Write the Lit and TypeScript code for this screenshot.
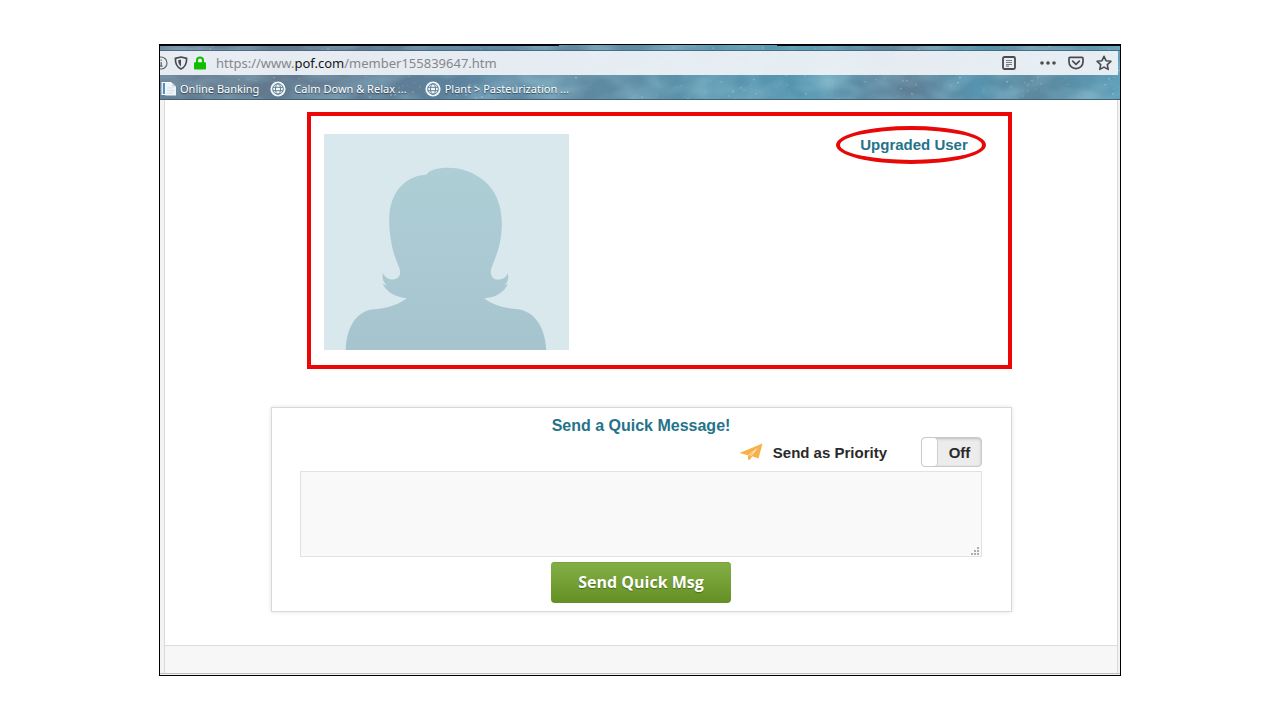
import { LitElement, html, svg, css } from "lit";
import { customElement, state } from "lit/decorators.js";

/** Scattered points for the starry toolbar theme: x, y, radius, opacity. */
function makeStars(count: number): number[][] {
  let seed = 71;
  const next = () => {
    seed = (seed * 16807) % 2147483647;
    return seed / 2147483647;
  };
  return Array.from({ length: count }, () => [
    Math.round(next() * 960),
    Math.round(next() * 54),
    0.4 + next() * 0.6,
    0.1 + next() * 0.35,
  ]);
}

const STARS = makeStars(360);

const globe = svg`<svg class="globe" viewBox="0 0 16 16" aria-hidden="true">
  <circle cx="8" cy="8" r="7.6" fill="#f4f8fa"/>
  <g fill="none" stroke="#5f8297" stroke-width="1">
    <circle cx="8" cy="8" r="5.3"/>
    <ellipse cx="8" cy="8" rx="2.5" ry="5.3"/>
    <path d="M2.9 6.3h10.2M2.9 9.7h10.2"/>
  </g>
</svg>`;

@customElement("browser-bar")
export class BrowserBar extends LitElement {
  static styles = css`
    :host {
      display: block;
      position: relative;
      overflow: hidden;
      color: #fff;
      font-family: "Noto Sans", "Open Sans", sans-serif;
      background: linear-gradient(90deg, #64788c 0%, #61798f 18%, #5c84a0 34%, #5f88a0 44%,
        #5793ac 58%, #5796b0 68%, #5f7f96 78%, #5693ae 85%, #5d889f 91%, #5798b3 100%);
    }
    .sky {
      position: absolute;
      inset: 0;
      width: 100%;
      height: 100%;
    }
    .tabs {
      position: relative;
      height: 6px;
      border-bottom: 1px solid #4c6c84;
      box-sizing: border-box;
      background: linear-gradient(90deg, #05080c 0 41.6%, transparent 41.6% 64.3%, #05080c 64.3%) top / 100% 1px no-repeat;
    }
    .address {
      position: relative;
      display: flex;
      align-items: center;
      height: 24px;
      margin-right: 2px;
      background: rgba(238, 242, 247, 0.94);
      color: #4a4a4f;
    }
    .info { width: 8px; height: 14px; }
    .shield { width: 14px; height: 14px; margin-left: 6px; }
    .lock { width: 12px; height: 14px; margin-left: 6px; }
    .url {
      flex: 1;
      min-width: 0;
      margin: 0 0 0 10px;
      font-size: 13px;
      line-height: 26px;
      color: #85878b;
      white-space: nowrap;
      overflow: hidden;
    }
    .host { color: #15171a; }
    button {
      display: block;
      padding: 0;
      border: 0;
      background: none;
      color: inherit;
      height: 16px;
    }
    button svg { display: block; width: 16px; height: 16px; }
    .actions {
      display: flex;
      align-items: center;
      gap: 12px;
      padding-right: 6px;
    }
    .reader { margin-right: 11px; }
    .bookmarks {
      position: relative;
      display: flex;
      align-items: center;
      height: 25px;
      padding: 3px 0 0 1px;
      box-sizing: border-box;
      border-bottom: 1px solid #3f6478;
      white-space: nowrap;
    }
    .bookmarks a {
      display: flex;
      align-items: center;
      color: #fff;
      font-size: 11px;
      line-height: 20px;
      text-decoration: none;
      text-shadow: 0 1px 1px #2d4355;
    }
    .bookmarks a + a { margin-left: 11px; }
    .bookmarks .tight { margin-left: 18px; }
    .page-icon { width: 15px; height: 16px; margin-right: 4px; }
    .globe { width: 16px; height: 16px; margin-right: 8px; }
    .tight .globe { margin-right: 4px; }
  `;

  render() {
    return html`
      <svg class="sky" viewBox="0 0 960 54" preserveAspectRatio="none" aria-hidden="true">
        <defs>
          <filter id="haze" x="0" y="0" width="100%" height="100%">
            <feTurbulence type="fractalNoise" baseFrequency="0.02 0.035" numOctaves="3" seed="8"></feTurbulence>
            <feColorMatrix values="0 0 0 0 0.4  0 0 0 0 0.7  0 0 0 0 0.8  0.9 0 0 0 -0.3"></feColorMatrix>
          </filter>
        </defs>
        <rect width="960" height="54" filter="url(#haze)"></rect>
        ${STARS.map(([x, y, r, o]) => svg`<circle cx=${x} cy=${y} r=${r} fill="#d9eef6" opacity=${o}></circle>`)}
      </svg>
      <div class="tabs"></div>
      <div class="address">
        <svg class="info" viewBox="0 0 8 14" aria-hidden="true">
          <circle cx="1" cy="7" r="6" fill="none" stroke="#66686c" stroke-width="1.2"/>
          <path d="M1.2 6v4.2M1.2 3.4v1.4M0 10.2h2.6" stroke="#66686c" stroke-width="1.3"/>
        </svg>
        <svg class="shield" viewBox="0 0 14 14" aria-hidden="true">
          <path d="M7 1 12.6 2.4C12.8 7.6 11 11.2 7 13 3 11.2 1.2 7.6 1.4 2.4Z" fill="none" stroke="#4a4a4f" stroke-width="1.7" stroke-linejoin="round"/>
          <path d="M7 3.6v6.8C5 9 4.2 7 4.2 4.3Z" fill="#4a4a4f"/>
        </svg>
        <svg class="lock" viewBox="0 0 12 14" aria-hidden="true">
          <path d="M3 7V4.4a3 3 0 0 1 6 0V7" fill="none" stroke="#12bc00" stroke-width="2"/>
          <rect x="0" y="6.2" width="12" height="7.3" rx="1" fill="#12bc00"/>
        </svg>
        <p class="url">https://www.<span class="host">pof.com</span>/member155839647.htm</p>
        <div class="actions">
          <button class="reader" aria-label="Reader view">
            <svg viewBox="0 0 16 16" fill="none" stroke="#4a4a4f">
              <rect x="2" y="2" width="12" height="12" rx="1.4" stroke-width="1.8"/>
              <path d="M5 5.5h6M5 7.5h6M5 9.5h6M5 11.2h3" stroke-width="1.2" stroke="#7c7e83"/>
            </svg>
          </button>
          <button aria-label="Page actions">
            <svg viewBox="0 0 16 16" fill="#4a4a4f">
              <circle cx="2" cy="8" r="1.8"/><circle cx="8" cy="8" r="1.8"/><circle cx="14" cy="8" r="1.8"/>
            </svg>
          </button>
          <button aria-label="Save to Pocket">
            <svg viewBox="0 0 16 16" fill="none" stroke="#4a4a4f" stroke-width="1.7" stroke-linecap="round" stroke-linejoin="round">
              <path d="M2 2.4h12a1 1 0 0 1 1 1V7a7 6.6 0 0 1-14 0V3.4a1 1 0 0 1 1-1Z"/>
              <path d="m4.7 6.2 3.3 3.1 3.3-3.1"/>
            </svg>
          </button>
          <button aria-label="Bookmark this page">
            <svg viewBox="0 0 16 16" fill="none" stroke="#4a4a4f" stroke-width="1.6" stroke-linejoin="round">
              <path d="m8 1.3 2 4.4 4.9.6-3.6 3.3.9 4.8L8 12.1l-4.2 2.3.9-4.8L1.1 6.3 6 5.7Z"/>
            </svg>
          </button>
        </div>
      </div>
      <nav class="bookmarks" aria-label="Bookmarks">
        <a href="#banking">
          <svg class="page-icon" viewBox="0 0 15 16" aria-hidden="true">
            <path d="M0.500 1h10v13h-10Z" fill="#fff"/>
            <path d="M1.800 2h2.200v11H1.800Z" fill="#4f93c4"/>
            <path d="M4.500 2h7L15 5.500V14.500H4.500Z" fill="#eef4f8"/>
            <path d="M11.500 2v3.500H15" fill="#bcd0dd"/>
            <path d="M6 7h6M6 9.500h7M6 12h6" stroke="#d3dfe7" stroke-width="1"/>
          </svg>
          Online Banking
        </a>
        <a href="#calm">${globe}Calm Down &amp; Relax ...</a>
        <a class="tight" href="#plant">${globe}Plant &gt; Pasteurization ...</a>
      </nav>
    `;
  }
}

@customElement("profile-card")
export class ProfileCard extends LitElement {
  static styles = css`
    :host {
      display: flex;
      justify-content: space-between;
      align-items: flex-start;
      padding: 9px 22px 15px 13px;
      border: 4px solid #ec0606;
      font-family: "Liberation Sans", Arial, sans-serif;
    }
    .avatar {
      display: block;
      width: 245px;
      height: 216px;
      margin-top: 9px;
    }
    .status {
      display: flex;
      align-items: center;
      justify-content: center;
      box-sizing: border-box;
      width: 150px;
      height: 38px;
      margin-top: 1px;
      padding-left: 6px;
      border: 4px solid #e80808;
      border-radius: 50%;
    }
    .status a {
      color: #25738a;
      font-size: 15px;
      font-weight: bold;
      line-height: 20px;
      text-decoration: none;
      white-space: nowrap;
    }
  `;

  render() {
    return html`
      <svg class="avatar" viewBox="74 90 733 647" preserveAspectRatio="none" role="img" aria-label="Profile photo placeholder">
        <defs>
          <linearGradient id="figure" x1="0" y1="0" x2="0" y2="1">
            <stop offset="0" stop-color="#aeced6"></stop>
            <stop offset="1" stop-color="#a6c4ce"></stop>
          </linearGradient>
        </defs>
        <rect x="74" y="90" width="733" height="647" fill="#d9e8ec"></rect>
        <path fill="url(#figure)" d="M139 737C142 662 175 622 218 616C262 613 295 602 322 582C290 579 262 566 249 538L263 545C252 534 247 523 250 506C257 520 268 526 281 526C296 525 304 514 301 499C299 484 281 456 275 412C269 380 268 354 270 325C279 255 322 215 381 211C387 198 415 191 443 191C490 191 521 205 553 230C586 258 607 300 606 365C605 420 590 452 577 486C567 510 577 526 594 526C608 526 619 520 624 507C628 524 622 536 612 545L625 538C612 566 588 580 553 582C580 603 616 612 655 615C703 622 736 668 739 737Z"></path>
      </svg>
      <div class="status"><a href="#upgraded">Upgraded User</a></div>
    `;
  }
}

@customElement("quick-message")
export class QuickMessage extends LitElement {
  static styles = css`
    :host {
      display: block;
      padding: 8px 29px 8px 28px;
      border: 1px solid #d9d9d9;
      box-shadow: 0 0 4px #e2e2e2;
      font-family: "Liberation Sans", Arial, sans-serif;
    }
    form { display: flex; flex-direction: column; }
    h2 {
      margin: 0 0 1px;
      color: #25738a;
      font-size: 16px;
      line-height: 20px;
      text-align: center;
    }
    .priority {
      display: flex;
      align-items: center;
      justify-content: flex-end;
      height: 30px;
      margin-bottom: 4px;
      color: #2a2a2a;
      font-size: 15px;
      font-weight: bold;
    }
    .plane { width: 24px; height: 18px; margin-right: 10px; }
    .switch {
      display: flex;
      align-items: center;
      box-sizing: border-box;
      width: 61px;
      height: 30px;
      margin-left: 34px;
      border: 1px solid #c9c9c9;
      border-radius: 4px;
      background: #ececec;
      box-shadow: inset 0 1px 3px #bdbdbd;
    }
    .switch input {
      appearance: none;
      width: 16px;
      height: 28px;
      margin: 0;
      border-right: 1px solid #cfcfcf;
      border-radius: 4px;
      background: #fff;
    }
    .switch span { flex: 1; text-align: center; }
    .field { position: relative; display: block; margin-bottom: 5px; }
    textarea {
      display: block;
      box-sizing: border-box;
      width: 100%;
      height: 86px;
      margin: 0;
      padding: 8px;
      border: 1px solid #e2e2e2;
      background: #f9f9f9;
      font: inherit;
      resize: none;
      outline: 0;
    }
    .grip { position: absolute; right: 3px; bottom: 2px; width: 9px; height: 8px; }
    .send {
      align-self: center;
      width: 180px;
      height: 41px;
      padding: 0 0 2px;
      border: 0;
      border-radius: 4px;
      background: linear-gradient(#83b046, #648f25);
      box-shadow: inset 0 1px 0 #76a33c;
      color: #fff;
      font-family: "Open Sans", sans-serif;
      font-size: 16px;
      font-weight: bold;
      text-shadow: 0 1px 1px #486c16;
    }
  `;

  @state() private priority = false;

  private toggle(e: Event) {
    this.priority = (e.target as HTMLInputElement).checked;
  }

  render() {
    return html`
      <form @submit=${(e: Event) => e.preventDefault()}>
        <h2 id="title">Send a Quick Message!</h2>
        <div class="priority">
          <svg class="plane" viewBox="0 0 24 18" aria-hidden="true">
            <path fill="#f8b04a" d="M0.500 10 23.500 0.500 19.500 15.500 13.200 13.200 11 16.800 9.200 16.800 8.800 12.200Z"/>
            <path d="M9.400 12.600 17.500 6 12 13" fill="none" stroke="#ffe9c6" stroke-width="1"/>
          </svg>
          <label for="priority">Send as Priority</label>
          <label class="switch">
            <input id="priority" type="checkbox" .checked=${this.priority} @change=${this.toggle}>
            <span>${this.priority ? "On" : "Off"}</span>
          </label>
        </div>
        <div class="field">
          <textarea aria-labelledby="title"></textarea>
          <svg class="grip" viewBox="0 0 9 8" fill="#adadad" aria-hidden="true">
            <path d="M7 0h2v2H7ZM4 3h2v2H4ZM7 3h2v2H7ZM1 6h2v2H1ZM4 6h2v2H4ZM7 6h2v2H7Z"/>
          </svg>
        </div>
        <button class="send">Send Quick Msg</button>
      </form>
    `;
  }
}

@customElement("app-root")
export class AppRoot extends LitElement {
  static styles = css`
    :host {
      display: block;
      padding: 44px 0;
      background: #fff;
    }
    .frame {
      width: 75%;
      margin: 0 auto;
      border: 1px solid #000;
      background: #f3f3f3;
    }
    .page {
      margin: 0 2px 0 4px;
      border: solid #dadada;
      border-width: 0 1px;
      background: #fff;
    }
    .content {
      display: flex;
      flex-direction: column;
      gap: 38px;
      padding: 12px 105px 33px 106px;
    }
    .profile { margin-left: 36px; }
    .footer {
      height: 27px;
      border-top: 1px solid #dcdcdc;
      background: #f7f7f7;
    }
    .edge { height: 1px; margin-bottom: 1px; background: #bfbfbf; }
  `;

  render() {
    return html`
      <div class="frame">
        <browser-bar></browser-bar>
        <main class="page">
          <div class="content">
            <profile-card class="profile"></profile-card>
            <quick-message></quick-message>
          </div>
          <footer class="footer"></footer>
        </main>
        <div class="edge"></div>
      </div>
    `;
  }
}
